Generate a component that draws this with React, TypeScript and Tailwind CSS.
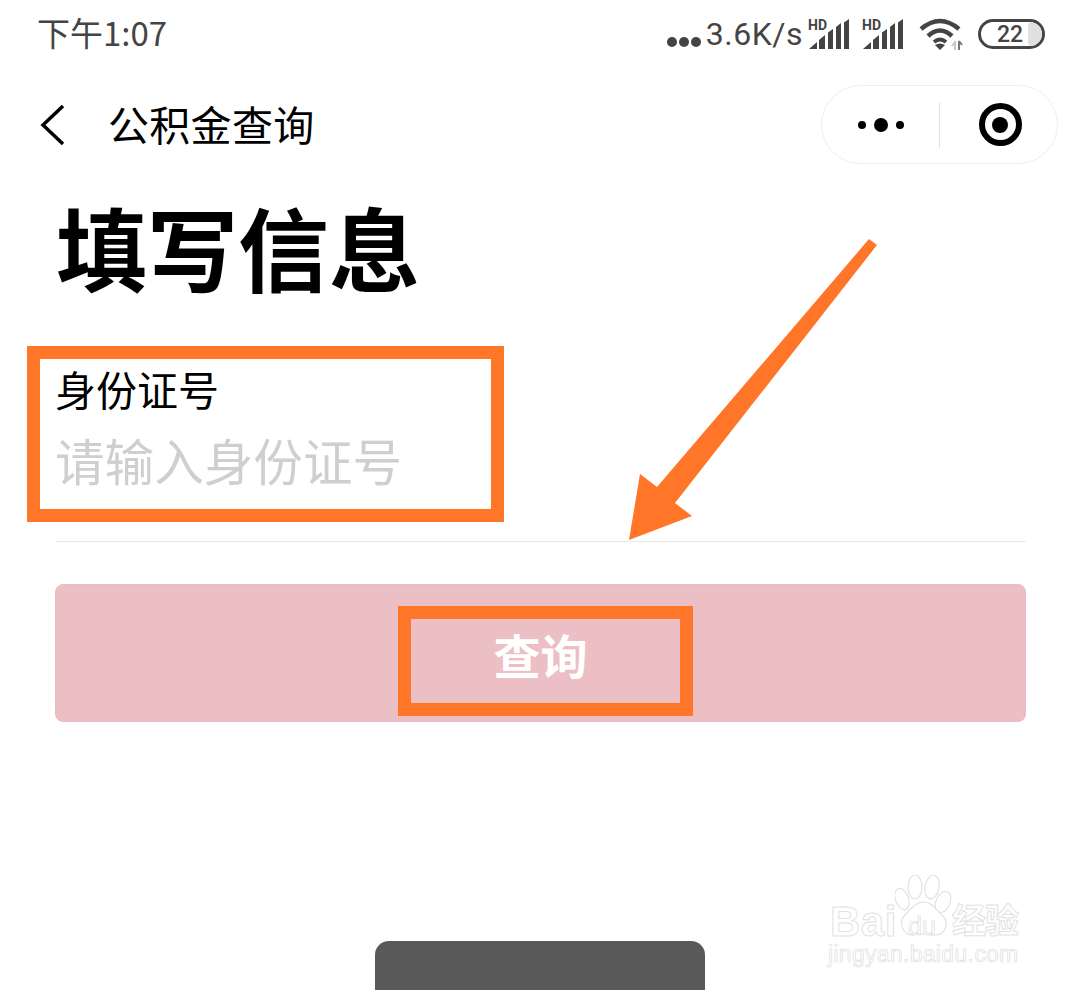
const cjk = "font-['Noto_Sans_CJK_SC','Noto_Sans',sans-serif]"

function Signal() {
  return (
    <svg width="42" height="35" viewBox="0 -4 42 35" className="mb-[4px] shrink-0">
      <text x="0" y="11" fontSize="14" fontWeight="700" fontFamily="Roboto, sans-serif" fill="#444">HD</text>
      <path d="M1 30 L9 23 V30 Z" fill="#444" />
      <path d="M11 30 V21 L17 16 V30 Z" fill="#444" />
      <path d="M20 30 V13.500 L25 10 V30 Z" fill="#444" />
      <path d="M28 30 V8 L33 4 V30 Z" fill="#444" />
      <path d="M36 30 V3.500 L41 0 V30 Z" fill="#444" />
    </svg>
  )
}

function Wifi() {
  return (
    <svg width="46" height="32" viewBox="0 0 46 32" className="shrink-0">
      <path d="M2 11 Q21 -5 40 11" fill="none" stroke="#444" strokeWidth="4.500" />
      <path d="M9 18 Q21 7 33 18" fill="none" stroke="#444" strokeWidth="4.500" />
      <path d="M15 24 Q21 19 27 24" fill="none" stroke="#444" strokeWidth="4" />
      <path d="M16 27 Q21 24 26 27 L21 32 Z" fill="#444" />
      <path d="M36 23 V32 M33 28 L36 24" stroke="#c8c8c8" strokeWidth="2" fill="none" />
      <path d="M40 23 V32 M40 23 L43 27" stroke="#777" strokeWidth="2" fill="none" />
    </svg>
  )
}

function Battery() {
  return (
    <div className="relative flex h-[30px] w-[67px] shrink-0 items-center justify-center overflow-hidden rounded-full border-[3px] border-[#444]">
      <div className="absolute right-0 top-0 h-full w-[14px] rounded-l-[4px] bg-[#e0e0e0]" />
      <span className="relative mr-[3px] font-['Roboto',sans-serif] text-[23px] font-medium leading-none text-[#444]">22</span>
    </div>
  )
}

function StatusBar() {
  return (
    <div className="flex h-[68px] items-center justify-between pl-[37px] pr-[35px] text-[#444]">
      <span className={`${cjk} -mt-[3px] text-[33px] leading-none`}>下午1:07</span>
      <div className="flex items-center">
        <div className="mr-[5px] mt-[15px] flex gap-[2px]">
          <span className="h-[10px] w-[10px] rounded-full bg-[#444]" />
          <span className="h-[10px] w-[10px] rounded-full bg-[#444]" />
          <span className="h-[10px] w-[10px] rounded-full bg-[#444]" />
        </div>
        <span className="mr-[5px] font-['Roboto',sans-serif] text-[32px] leading-none tracking-[0.5px]">3.6K/s</span>
        <Signal />
        <div className="w-[12px]" />
        <Signal />
        <div className="w-[15px]" />
        <Wifi />
        <div className="w-[13px]" />
        <Battery />
      </div>
    </div>
  )
}

function NavBar() {
  return (
    <div className="mt-[17px] flex h-[79px] items-center justify-between pl-[40px] pr-[22px]">
      <div className="flex items-center">
        <svg width="26" height="42" viewBox="0 0 26 42">
          <path d="M23 2 L3 21 L23 40" fill="none" stroke="#000" strokeWidth="3.500" />
        </svg>
        <span className={`${cjk} -mt-[3px] ml-[42px] text-[41px] leading-none tracking-[0.3px] text-black`}>公积金查询</span>
      </div>
      <div className="flex h-[79px] w-[237px] items-center rounded-full border border-[#eeeeee]">
        <div className="flex w-[117px] items-center justify-center gap-[8px]">
          <span className="h-[8px] w-[8px] rounded-full bg-black" />
          <span className="h-[14px] w-[14px] rounded-full bg-black" />
          <span className="h-[8px] w-[8px] rounded-full bg-black" />
        </div>
        <div className="h-[46px] w-px bg-[#e2e2e2]" />
        <div className="flex flex-1 items-center justify-center pl-[3px]">
          <div className="flex h-[43px] w-[43px] items-center justify-center rounded-full border-[6px] border-black">
            <span className="h-[16px] w-[16px] rounded-full bg-black" />
          </div>
        </div>
      </div>
    </div>
  )
}

function Watermark() {
  return (
    <div className="absolute left-[828px] top-[875px] h-[92px] w-[194px]">
      <svg width="60" height="62" viewBox="0 0 60 62" className="absolute left-[67px] top-0">
        <g fill="#fff" stroke="#e2e2e2" strokeWidth="1.200">
          <ellipse cx="7" cy="24" rx="6.500" ry="11" transform="rotate(-20 7 24)" />
          <ellipse cx="20" cy="12" rx="7" ry="12" />
          <ellipse cx="37" cy="12" rx="7" ry="12" transform="rotate(10 37 12)" />
          <ellipse cx="48" cy="27" rx="7" ry="11" transform="rotate(25 48 27)" />
          <path d="M29 27 C37 27 41 35 48 41 C54 47 51 60 40 60 C34 60 26 58 18 60 C7 60 4 47 9 41 C15 35 20 27 29 27 Z" />
        </g>
      </svg>
      <div className="absolute left-[2px] top-[24px] font-['Liberation_Sans',sans-serif] text-[42px] font-bold leading-[46px] tracking-[0.5px] text-white [-webkit-text-stroke:1px_#e2e2e2]">Bai</div>
      <div className="absolute left-[80px] top-[37px] font-['Liberation_Sans',sans-serif] text-[25px] leading-[28px] text-white [-webkit-text-stroke:0.7px_#dcdcdc]">du</div>
      <div className={`${cjk} absolute left-[124px] top-[24px] text-[34px] font-bold leading-[40px] tracking-[-1px] text-white [-webkit-text-stroke:1px_#e2e2e2]`}>经验</div>
      <div className="absolute left-0 top-[66px] font-['Liberation_Sans',sans-serif] text-[23px] leading-[26px] tracking-[0.3px] text-white [-webkit-text-stroke:0.7px_#e0e0e0]">jingyan.baidu.com</div>
    </div>
  )
}

export default function App() {
  return (
    <div className="relative h-[990px] w-[1080px] overflow-hidden bg-white">
      <StatusBar />
      <NavBar />

      <h1 className={`${cjk} ml-[56px] mt-[36px] h-[95px] text-[91px] font-bold leading-[90px] text-black`}>填写信息</h1>

      <div className="pl-[55px] pr-[54px]">
        <div className={`${cjk} mt-[73px] h-[43px] text-[41px] leading-[40px] text-black`}>身份证号</div>
        <div className={`${cjk} mt-[23px] h-[53px] text-[49.600px] leading-[50px] text-[#cfcfcf]`}>请输入身份证号</div>
        <div className="mt-[54px] h-px bg-[#e8e8e8]" />
        <button className={`${cjk} mt-[42px] flex h-[138px] w-full items-center justify-center rounded-[8px] border border-[#e6bcc2] bg-[#ecbfc5] text-[47px] font-bold leading-none text-white`}>查询</button>
      </div>

      {/* annotation marks over the page */}
      <div className="absolute left-[27px] top-[346px] h-[176px] w-[477px] border-[13px] border-[#ff7629]" />
      <div className="absolute left-[398px] top-[606px] h-[110px] w-[295px] border-[13px] border-[#ff7629]" />
      <svg width="1080" height="990" viewBox="0 0 1080 990" className="absolute left-0 top-0">
        <polygon points="869,239 877,245 675,503 692,516 629,540 640,474 657,487" fill="#ff7629" />
      </svg>

      <Watermark />

      <div className="absolute bottom-0 left-[375px] h-[49px] w-[330px] rounded-t-[14px] bg-[#595959]" />
    </div>
  )
}
